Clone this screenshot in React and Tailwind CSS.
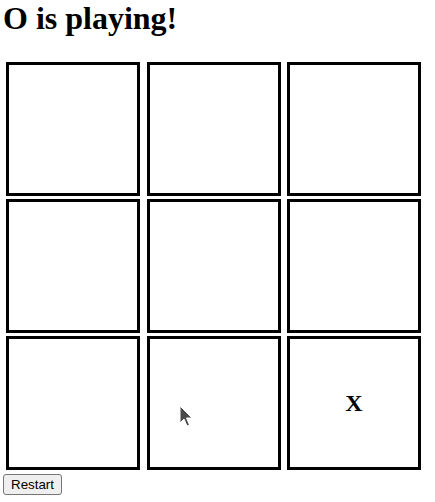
import React, { useState } from 'react';

const Cell = ({ value, onClick }) => (
  <div
    onClick={onClick}
    className="w-[134px] h-[134px] border-[3px] border-black bg-white flex items-center justify-center text-[24px] font-bold"
  >
    {value}
  </div>
);

const Cursor = () => (
  <svg className="absolute left-[178px] top-[404px] pointer-events-none" width="16" height="24" viewBox="0 0 16 24">
    <path d="M2 2 L2 19 L6 15 L9 22 L11.5 21 L8.5 14 L14 14 Z" fill="#4a4a4a" stroke="#ffffff" strokeWidth="1" strokeLinejoin="round" />
  </svg>
);

export default function App() {
  const [board, setBoard] = useState([null, null, null, null, null, null, null, null, 'X']);
  const [player, setPlayer] = useState('O');

  const play = (i) => {
    if (board[i]) return;
    const next = [...board];
    next[i] = player;
    setBoard(next);
    setPlayer(player === 'O' ? 'X' : 'O');
  };

  const restart = () => {
    setBoard(Array(9).fill(null));
    setPlayer('X');
  };

  return (
    <div className="relative pl-[3px] bg-white min-h-[502px] font-['Liberation_Serif',serif] text-black">
      <h1 className="text-[32px] font-bold leading-[37px]">{player} is playing!</h1>

      <div className="mt-[25px] ml-[3px] grid grid-cols-[134px_134px_134px] gap-x-[6.5px] gap-y-[3px] w-fit">
        {board.map((v, i) => (
          <Cell key={i} value={v} onClick={() => play(i)} />
        ))}
      </div>

      <button
        onClick={restart}
        className="mt-[4px] px-[7px] py-[2px] bg-[#efefef] border border-[#767676] rounded-[3px] text-[13.33px] leading-[15px] font-['Liberation_Sans',Arial,sans-serif] text-black"
      >
        Restart
      </button>

      <Cursor />
    </div>
  );
}
